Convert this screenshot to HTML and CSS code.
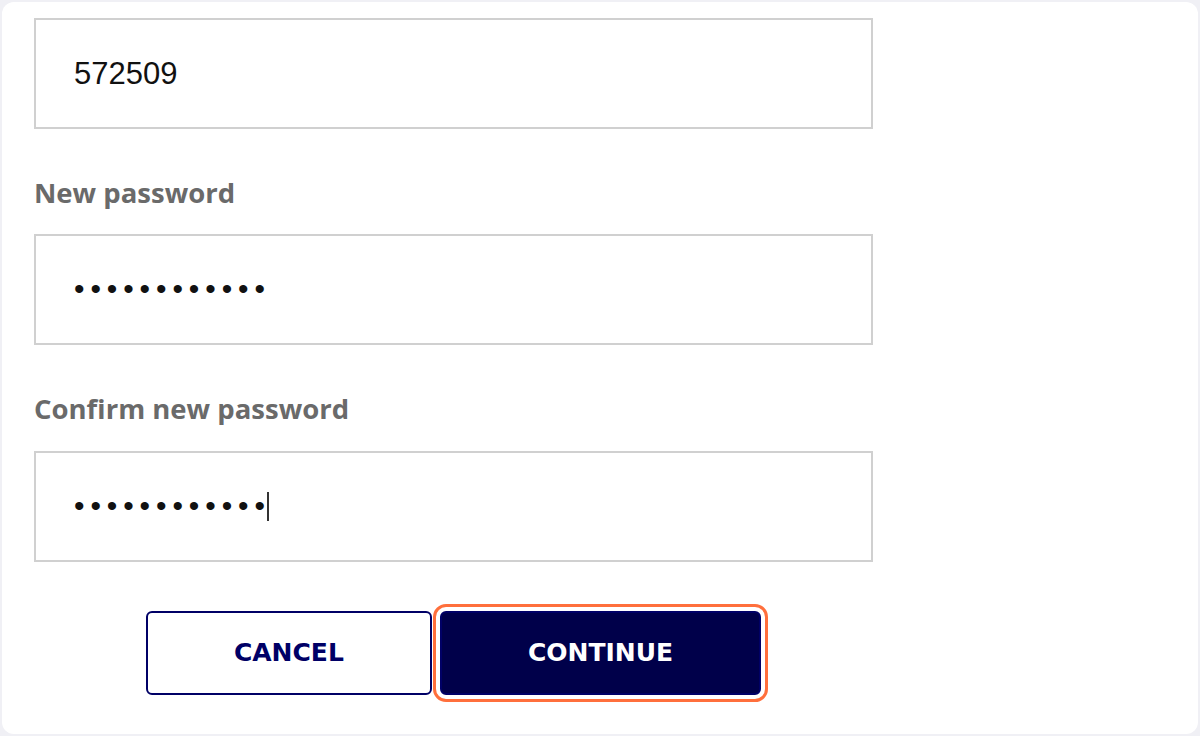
FILE: index.html
```html
<!DOCTYPE html>
<html>
<head>
<meta charset="utf-8">
<link rel="stylesheet" href="styles.css">
</head>
<body>
<div class="card">
  <div class="input"><span class="value">572509</span></div>
  <div class="field">
    <div class="label">New password</div>
    <div class="input"><span class="value dots">••••••••••••</span></div>
  </div>
  <div class="field">
    <div class="label">Confirm new password</div>
    <div class="input"><span class="value dots">••••••••••••</span><span class="caret"></span></div>
  </div>
  <div class="actions">
    <button class="btn btn-outline">CANCEL</button>
    <button class="btn btn-primary">CONTINUE</button>
  </div>
</div>
</body>
</html>
```
FILE: styles.css
```css
html, body {
  margin: 0;
  padding: 0;
}
body {
  background: #f0f0f5;
  width: 1200px;
  height: 736px;
  overflow: hidden;
  padding: 2px;
  box-sizing: border-box;
}
.card {
  background: #ffffff;
  border-radius: 12px;
  height: 732px;
  box-sizing: border-box;
  padding: 16px 32px;
}
.input {
  width: 839px;
  height: 111px;
  box-sizing: border-box;
  border: 2px solid #d0d0d0;
  padding-left: 38px;
  display: flex;
  align-items: center;
}
.value {
  font-family: "Liberation Sans", Arial, sans-serif;
  font-size: 31px;
  color: #111111;
}
.dots {
  font-size: 30px;
  letter-spacing: 5.9px;
  margin-right: -4px;
  position: relative;
  top: -1px;
}
.caret {
  display: inline-block;
  width: 2px;
  height: 29px;
  background: #333333;
}
.field {
  margin-top: 48px;
}
.label {
  font-family: "Open Sans", "Liberation Sans", sans-serif;
  font-weight: 700;
  font-size: 27.5px;
  line-height: 32px;
  color: #6a6a6a;
  margin-bottom: 25px;
}
.field + .field .label {
  margin-bottom: 26px;
}
.actions {
  width: 839px;
  margin-top: 49px;
  display: flex;
  justify-content: center;
  gap: 8px;
}
.btn {
  font-family: "DejaVu Sans", "Liberation Sans", sans-serif;
  font-weight: 700;
  font-size: 25px;
  letter-spacing: 0;
  height: 84px;
  padding: 0 86px 2px;
  border-radius: 6px;
  border: 2px solid #000066;
  box-sizing: border-box;
}
.btn-outline {
  background: #ffffff;
  color: #000066;
}
.btn-primary {
  background: #00004a;
  color: #ffffff;
  outline: 3px solid #ff6f3c;
  outline-offset: 4px;
}
```
